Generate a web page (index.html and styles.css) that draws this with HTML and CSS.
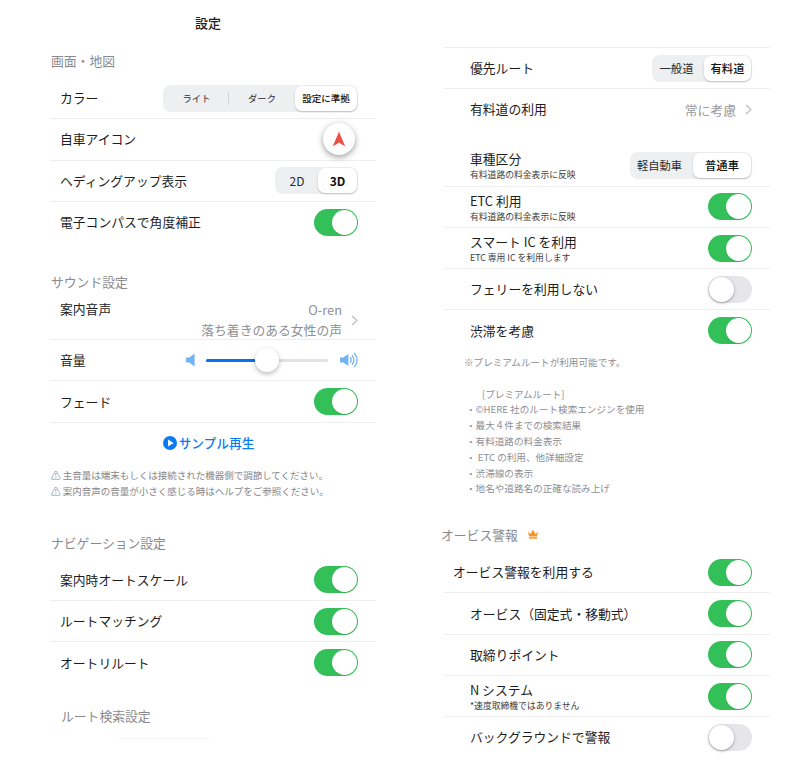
FILE: index.html
```html
<!DOCTYPE html>
<html lang="ja">
<head>
<meta charset="utf-8">
<title>設定</title>
<link rel="stylesheet" href="styles.css">
</head>
<body>
<div class="page">
  <main class="col">
    <h1 class="title">設定</h1>
    <h2 class="head head-first">画面・地図</h2>
    <div class="row">
      <span class="label">カラー</span>
      <div class="seg seg-color">
        <span class="opt opt-w1 divider">ライト</span>
        <span class="opt opt-w2">ダーク</span>
        <span class="opt opt-w3 on">設定に準拠</span>
      </div>
    </div>
    <div class="row">
      <span class="label">自車アイコン</span>
      <span class="car-btn">
        <svg width="14" height="16" viewBox="0 0 14 16"><path d="M7 0.3 C8.2 4 11 10.5 13.4 15.3 C10.6 14 8.8 13.2 7 11.6 C5.2 13.2 3.4 14 0.6 15.3 C3 10.5 5.8 4 7 0.3 Z" fill="#ee4f44"/></svg>
      </span>
    </div>
    <div class="row">
      <span class="label">ヘディングアップ表示</span>
      <div class="seg seg-dim">
        <span class="opt opt-2d">2D</span>
        <span class="opt opt-3d on">3D</span>
      </div>
    </div>
    <div class="row last">
      <span class="label">電子コンパスで角度補正</span>
      <span class="toggle"></span>
    </div>

    <h2 class="head head-sound">サウンド設定</h2>
    <div class="row row-voice">
      <span class="label label-voice">案内音声</span>
      <div class="voice-value">
        <div class="voice-text">
          <span>O-ren</span>
          <span>落ち着きのある女性の声</span>
        </div>
        <svg class="chev" width="7" height="11" viewBox="0 0 7 11"><path d="M1 1 L6 5.5 L1 10" fill="none" stroke="#bdbdc2" stroke-width="1.2"/></svg>
      </div>
    </div>
    <div class="row">
      <span class="label">音量</span>
      <div class="volume">
        <svg width="9" height="14" viewBox="0 0 9 14"><path d="M0 4.5 H3.2 L8.6 0.5 V13.5 L3.2 9.5 H0 Z" fill="#74b2f6"/></svg>
        <div class="track"><span class="fill"></span><span class="thumb"></span></div>
        <svg width="18" height="18" viewBox="0 0 18 18"><path d="M0 6.5 H3.2 L8.4 3 V15 L3.2 11.5 H0 Z" fill="#74b2f6"/><path d="M10 6.3 A4 4 0 0 1 10 11.7 M12 4.2 A7 7 0 0 1 12 13.8 M14.2 2 A10 10 0 0 1 14.2 16" fill="none" stroke="#74b2f6" stroke-width="1.3"/></svg>
      </div>
    </div>
    <div class="row">
      <span class="label">フェード</span>
      <span class="toggle"></span>
    </div>
    <div class="sample">
      <svg width="14" height="14" viewBox="0 0 14 14"><circle cx="7" cy="7" r="7" fill="#0a7bf0"/><path d="M5 3.6 L10.6 7 L5 10.4 Z" fill="#fff"/></svg>
      <span>サンプル再生</span>
    </div>
    <div class="notes">
      <p>⚠ 主音量は端末もしくは接続された機器側で調節してください。</p>
      <p>⚠ 案内音声の音量が小さく感じる時はヘルプをご参照ください。</p>
    </div>

    <h2 class="head head-nav">ナビゲーション設定</h2>
    <div class="row">
      <span class="label">案内時オートスケール</span>
      <span class="toggle"></span>
    </div>
    <div class="row">
      <span class="label">ルートマッチング</span>
      <span class="toggle"></span>
    </div>
    <div class="row last">
      <span class="label">オートリルート</span>
      <span class="toggle"></span>
    </div>
    <h2 class="head head-route">ルート検索設定</h2>
    <div class="faint"></div>
  </main>

  <section class="col col-right">
    <div class="row row-top indent">
      <span class="label">優先ルート</span>
      <div class="seg seg-road">
        <span class="opt opt-road1">一般道</span>
        <span class="opt opt-road2 on">有料道</span>
      </div>
    </div>
    <div class="row last indent">
      <span class="label">有料道の利用</span>
      <div class="toll-value">
        <span>常に考慮</span>
        <svg class="chev" width="7" height="11" viewBox="0 0 7 11"><path d="M1 1 L6 5.5 L1 10" fill="none" stroke="#bdbdc2" stroke-width="1.2"/></svg>
      </div>
    </div>
    <div class="row row-car indent">
      <div class="stack"><span class="label">車種区分</span><span class="sub">有料道路の料金表示に反映</span></div>
      <div class="seg seg-car">
        <span class="opt opt-car1">軽自動車</span>
        <span class="opt opt-car2 on">普通車</span>
      </div>
    </div>
    <div class="row indent">
      <div class="stack"><span class="label">ETC 利用</span><span class="sub">有料道路の料金表示に反映</span></div>
      <span class="toggle"></span>
    </div>
    <div class="row indent">
      <div class="stack"><span class="label">スマート IC を利用</span><span class="sub">ETC 専用 IC を利用します</span></div>
      <span class="toggle"></span>
    </div>
    <div class="row indent">
      <span class="label">フェリーを利用しない</span>
      <span class="toggle off"></span>
    </div>
    <div class="row last indent">
      <span class="label">渋滞を考慮</span>
      <span class="toggle"></span>
    </div>
    <div class="premium">
      <p class="p-star">※プレミアムルートが利用可能です。</p>
      <p class="p-title">[プレミアムルート]</p>
      <p>・©HERE 社のルート検索エンジンを使用</p>
      <p>・最大４件までの検索結果</p>
      <p>・有料道路の料金表示</p>
      <p>・ ETC の利用、他詳細設定</p>
      <p>・渋滞線の表示</p>
      <p>・地名や道路名の正確な読み上げ</p>
    </div>
    <h2 class="head head-orbis">オービス警報
      <svg width="12" height="10" viewBox="0 0 12 10"><path d="M1 2.5 L3.4 5 L6 0.8 L8.6 5 L11 2.5 L10 7.5 H2 Z" fill="#f5962a"/><rect x="2" y="8.2" width="8" height="1.5" fill="#f5962a"/></svg>
    </h2>
    <div class="row row-orbis">
      <span class="label">オービス警報を利用する</span>
      <span class="toggle"></span>
    </div>
    <div class="row indent">
      <span class="label">オービス（固定式・移動式）</span>
      <span class="toggle"></span>
    </div>
    <div class="row indent">
      <span class="label">取締りポイント</span>
      <span class="toggle"></span>
    </div>
    <div class="row indent">
      <div class="stack"><span class="label">N システム</span><span class="sub">*速度取締機ではありません</span></div>
      <span class="toggle"></span>
    </div>
    <div class="row last indent">
      <span class="label">バックグラウンドで警報</span>
      <span class="toggle off"></span>
    </div>
  </section>
</div>
</body>
</html>
```
FILE: styles.css
```css
* { box-sizing: border-box; }
html, body { margin: 0; padding: 0; background: #fff; }
body {
  width: 804px;
  height: 768px;
  overflow: hidden;
  font-family: "Noto Sans CJK JP", "Liberation Sans", sans-serif;
  color: #1d1d1f;
}
p, h1, h2 { margin: 0; font-weight: 400; }
.page { display: flex; gap: 68px; padding-left: 50px; }
.col { width: 326px; flex: none; }
.title {
  height: 44px;
  padding-right: 10px;
  display: flex;
  align-items: center;
  justify-content: center;
  font-size: 13px;
  font-weight: 500;
  color: #1d1d1f;
}
.head {
  height: 26px;
  display: flex;
  align-items: center;
  font-size: 12.8px;
  color: #8a8a8e;
  margin-left: 1px;
}
.head-first { margin-top: 3px; margin-bottom: 5px; }
.head-sound { margin-top: 25px; margin-bottom: 1px; }
.head-nav { margin-top: 31px; margin-bottom: 4px; }
.head-route { margin: 19px 0 0 11px; }
.head-orbis { margin: 24px 0 5px -3px; gap: 9px; }
.row {
  height: 41.3px;
  padding: 0 18px 0 10px;
  display: flex;
  align-items: center;
  justify-content: space-between;
  border-bottom: 1px solid #eeeeef;
}
.row.last { border-bottom-color: transparent; }
.label { font-size: 12.8px; line-height: 16px; white-space: nowrap; }
.indent { padding-left: 26px; }
.row-orbis { padding-left: 9px; }
.row-top { border-top: 1px solid #eeeeef; height: 42px; }
.row-car { margin-top: 15px; }
.stack { display: flex; flex-direction: column; padding-top: 3px; }
.sub { font-size: 8.8px; line-height: 14px; margin-top: 1px; color: #3c3c40; white-space: nowrap; }

.seg {
  height: 27px;
  display: flex;
  background: #eeeff1;
  border-radius: 8px;
  padding: 1px;
  font-size: 10px;
}
.opt {
  display: flex;
  align-items: center;
  justify-content: center;
  color: #2c2c2e;
  border-radius: 7px;
}
.opt.on {
  background: #fff;
  font-weight: 500;
  color: #111;
  box-shadow: 0 1px 2px rgba(0,0,0,.22);
}
.seg-color { width: 195px; }
.opt-w1 { width: 65px; font-size: 9.3px; }
.opt-w2 { width: 66px; font-size: 9.3px; }
.opt-w3 { width: 62px; font-size: 9.5px; }
.divider { position: relative; }
.divider::after {
  content: "";
  position: absolute;
  right: 0;
  top: 6px;
  bottom: 6px;
  width: 1px;
  background: #d4d4d8;
}
.seg-dim { width: 83px; font-size: 12px; }
.opt-2d { width: 42px; }
.opt-3d { width: 39px; font-weight: 700; }
.opt-3d.on { font-weight: 700; }
.seg-road { width: 100px; font-size: 11.3px; }
.opt-road1 { width: 51px; padding-right: 4px; }
.opt-road2 { width: 47px; }
.seg-car { width: 122px; font-size: 11.3px; }
.opt-car1 { width: 62px; padding-right: 5px; }
.opt-car2 { width: 58px; }

.toggle {
  position: relative;
  flex: none;
  width: 44px;
  height: 27px;
  border-radius: 14px;
  background: #34c059;
}
.toggle::after {
  content: "";
  position: absolute;
  top: 1px;
  right: 1px;
  width: 25px;
  height: 25px;
  border-radius: 50%;
  background: #fff;
  box-shadow: 0 1px 2px rgba(0,0,0,.1);
}
.toggle.off { background: #e6e6ea; }
.toggle.off::after {
  right: auto;
  left: 1px;
  box-shadow: 0 1px 3px rgba(0,0,0,.35);
}

.car-btn {
  width: 32px;
  height: 32px;
  margin-right: 3px;
  border-radius: 50%;
  background: #fff;
  display: flex;
  align-items: center;
  justify-content: center;
  box-shadow: 0 2px 6px rgba(0,0,0,.4);
}

.row-voice { height: 45px; align-items: flex-start; padding-right: 18px; }
.label-voice { margin-top: 6px; }
.voice-value { display: flex; align-items: center; gap: 9px; margin-top: 5px; color: #8e8e93; }
.voice-text { display: flex; flex-direction: column; align-items: flex-end; font-size: 12.8px; line-height: 20px; }
.chev { flex: none; }
.toll-value { display: flex; align-items: center; gap: 9px; font-size: 12.8px; color: #98989c; }

.volume { display: flex; align-items: center; }
.track {
  position: relative;
  width: 122px;
  height: 3px;
  margin: 0 12px 0 11px;
  border-radius: 2px;
  background: #e2e2e4;
}
.fill {
  display: block;
  width: 50px;
  height: 3px;
  border-radius: 2px;
  background: #0a6ff0;
}
.thumb {
  position: absolute;
  left: 49px;
  top: -11px;
  width: 24px;
  height: 24px;
  border-radius: 50%;
  background: #fff;
  box-shadow: 0 2px 5px rgba(0,0,0,.28);
}

.sample {
  height: 40px;
  padding-right: 9px;
  display: flex;
  align-items: center;
  justify-content: center;
  gap: 2px;
  font-size: 12.7px;
  font-weight: 500;
  color: #0a7bf0;
}
.notes { margin: 4px 0 0 1px; font-size: 9.5px; line-height: 16px; color: #85858a; white-space: nowrap; }

.faint { width: 92px; height: 1px; margin: 9px 0 0 68px; background: #f5f5f6; }

.col-right { padding-top: 47px; }
.premium { margin: 3px 0 0 22px; font-size: 9.6px; line-height: 15.8px; color: #8e8e93; white-space: nowrap; }
.p-star { margin-bottom: 16px; margin-left: -2px; }
.p-title { margin-left: 16px; }
```
